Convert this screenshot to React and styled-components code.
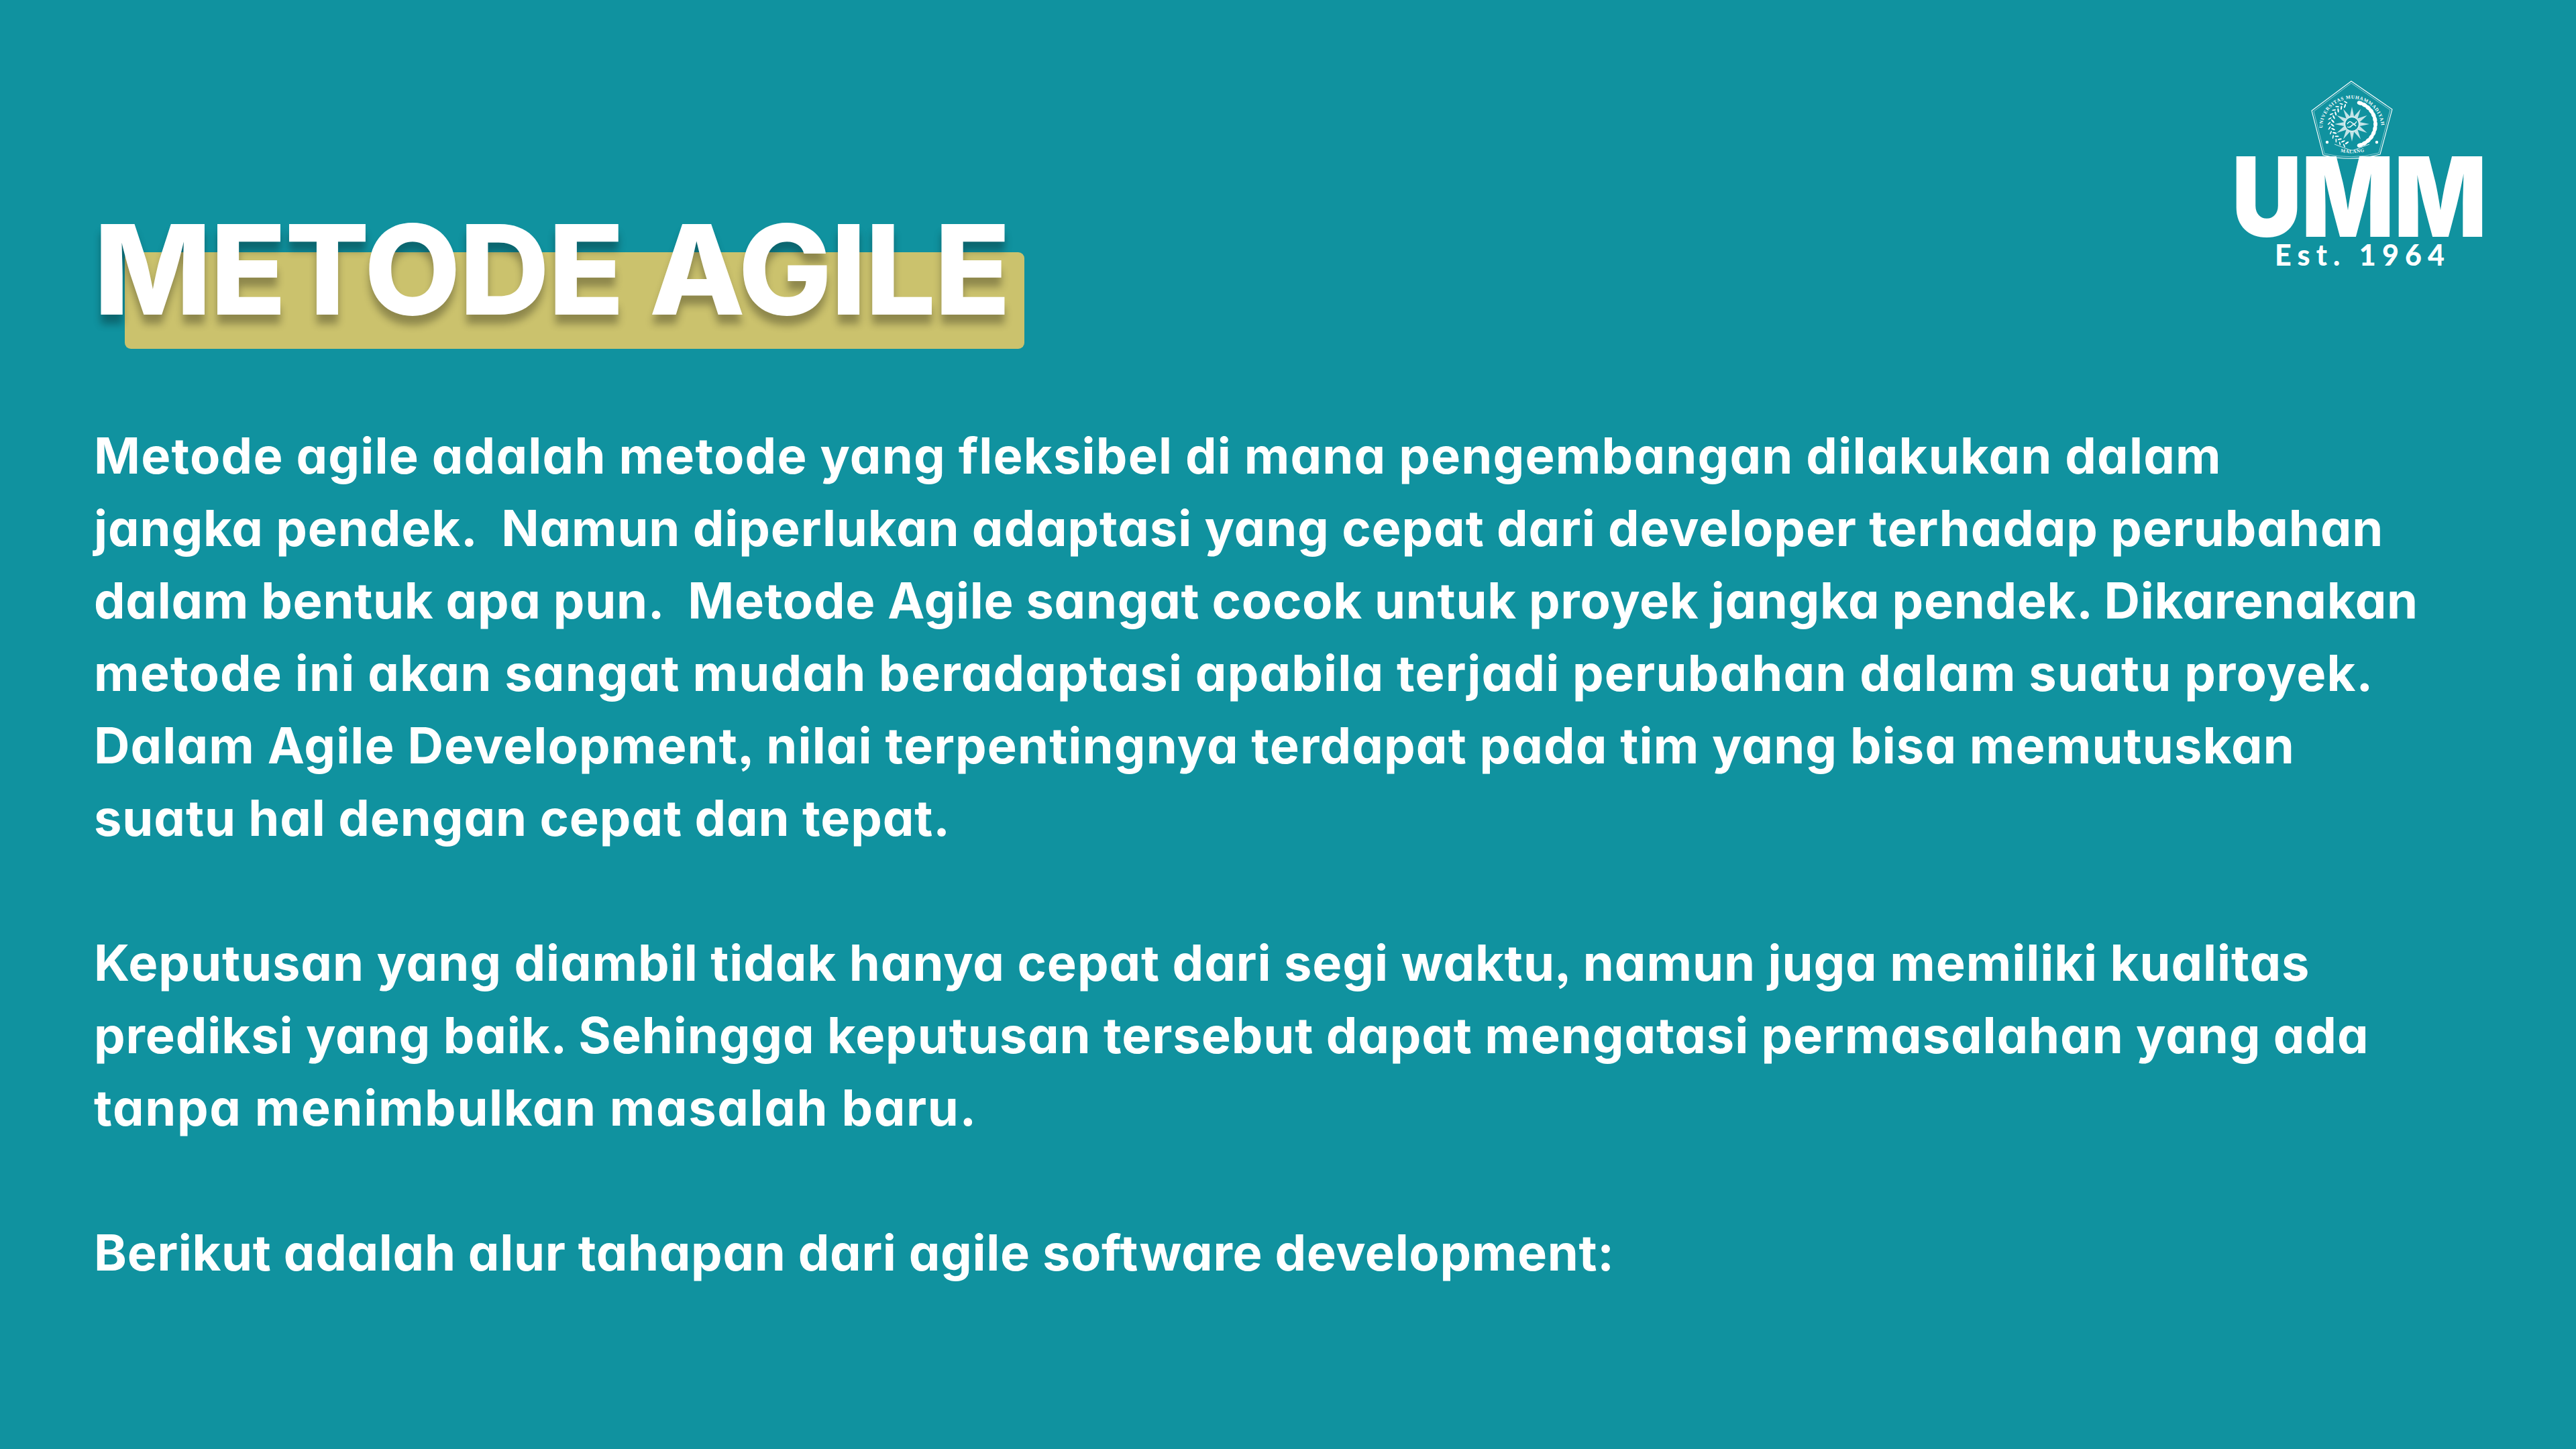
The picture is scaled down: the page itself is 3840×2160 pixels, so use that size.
import React from 'react'
import styled, { createGlobalStyle } from 'styled-components'

const Global = createGlobalStyle`
  html, body { margin: 0; padding: 0; background: #10929f; }
`

const Slide = styled.div`
  width: 3840px;
  height: 2160px;
  box-sizing: border-box;
  padding: 121px 141px 0 140px;
  background: #10929f;
  color: #fff;
  font-family: Inter, "Liberation Sans", sans-serif;
  font-feature-settings: "cv11" 1, "ss03" 1;
  overflow: hidden;
`

const Header = styled.header`
  display: flex;
  justify-content: space-between;
  align-items: flex-start;
`

const TitleBlock = styled.div`
  display: grid;
  margin-top: 188px;
`

const TitleBar = styled.div`
  grid-area: 1 / 1;
  width: 1341px;
  height: 144px;
  margin: 67px 0 0 46px;
  background: #cbc26d;
  border-radius: 9px;
`

const Title = styled.h1`
  grid-area: 1 / 1;
  margin: 0;
  font-size: 186px;
  line-height: 186px;
  font-weight: 800;
  letter-spacing: -1.9px;
  white-space: pre;
  text-shadow: 0 14px 12px rgba(0, 0, 0, 0.3);
`

const Body = styled.main`
  margin-top: 105px;
`

const Paragraph = styled.p`
  margin: 0 0 108px;
`

const Line = styled.span`
  display: block;
  height: 108px;
  font-size: 74px;
  line-height: 108px;
  font-weight: 700;
  white-space: pre;
  letter-spacing: ${(p) => p.$tracking}px;
`

const LogoSvg = styled.svg`
  display: block;
  width: 364px;
  height: 290px;
  overflow: visible;
`

const EmblemText = styled.text`
  font-family: "Liberation Serif", serif;
  font-size: 7.2px;
  font-weight: 700;
  fill: #fff;
`

const WordMark = styled.text`
  font-family: Inter, "Liberation Sans", sans-serif;
  font-size: 165px;
  font-weight: 900;
  fill: #fff;
`

const Since = styled.text`
  font-family: Lato, "Liberation Sans", sans-serif;
  font-size: 43px;
  font-weight: 900;
  fill: #fff;
`

const polar = (r, deg, cx = 60, cy = 64) => {
  const a = (deg * Math.PI) / 180
  return [cx + r * Math.cos(a), cy + r * Math.sin(a)]
}

const starPoints = Array.from({ length: 24 }, (_, i) => {
  const [x, y] = polar(i % 2 ? 12 : 26, i * 15 - 90)
  return `${x.toFixed(1)},${y.toFixed(1)}`
}).join(' ')

const chainAngles = [-72, -60, -48, -36, -24, -12, 0, 12, 24, 36, 48, 60, 72]
const leafAngles = [105, 117, 129, 141, 153, 165, 177, 189, 201, 213, 225, 237, 249]

const Logo = () => (
  <LogoSvg viewBox="0 0 364 290" fill="#fff">
    {/* emblem, 120 wide, centred over the wordmark */}
    <g transform="translate(111 0)">
      <g fill="none" stroke="#fff">
        <path d="M59 0 L120 42 L102 109 Q59 121 17 110 L0 44 Z" strokeWidth="1.1" />
        <path d="M59 3 L117 43 L100 107 Q59 118 19 108 L3 45 Z" strokeWidth="0.5" />
        <path d="M34 94 L58 103 L62 103 L86 94" strokeWidth="0.8" />
      </g>
      <defs>
        <path id="ringTop" d="M16 70 A44 44 0 0 1 104 70" />
        <path id="ringBottom" d="M41 105 Q60 110 81 104" />
      </defs>
      <EmblemText>
        <textPath href="#ringTop" textLength="134" lengthAdjust="spacing">UNIVERSITAS  MUHAMMADIYAH</textPath>
      </EmblemText>
      <EmblemText>
        <textPath href="#ringBottom" textLength="36" startOffset="2">MALANG</textPath>
      </EmblemText>
      <polygon points={starPoints} fillOpacity="0.75" />
      <circle cx="60" cy="64" r="10.5" fill="#10929f" stroke="#fff" strokeWidth="1" />
      <path d="M53 64 q3 -6 7 -2 q4 4 7 -2 M53 68 q4 2 7 -2 q3 -3 6 1" fill="none" stroke="#fff" strokeWidth="1.3" />
      {chainAngles.map((d) => {
        const [x, y] = polar(33, d, 62, 64)
        return <ellipse key={d} cx={x} cy={y} rx="4.6" ry="3" transform={`rotate(${d + 90} ${x} ${y})`} />
      })}
      {leafAngles.map((d) => {
        const [x, y] = polar(29, d)
        const [x2, y2] = polar(34, d + 5)
        return (
          <g key={d}>
            <ellipse cx={x} cy={y} rx="3.2" ry="1.1" transform={`rotate(${d + 40} ${x} ${y})`} />
            <ellipse cx={x2} cy={y2} rx="3" ry="0.9" transform={`rotate(${d - 40} ${x2} ${y2})`} />
          </g>
        )
      })}
      <circle cx="23" cy="91" r="2.2" />
      <circle cx="97" cy="91" r="2.2" />
    </g>
    {/* wordmark */}
    <WordMark x="-8" y="232" textLength="380" lengthAdjust="spacingAndGlyphs">UMM</WordMark>
    <Since x="56" y="275" textLength="253" lengthAdjust="spacing">Est. 1964</Since>
  </LogoSvg>
)

const paragraphs = [
  [
    ['Metode agile adalah metode yang fleksibel di mana pengembangan dilakukan dalam', 1.2],
    ['jangka pendek.  Namun diperlukan adaptasi yang cepat dari developer terhadap perubahan', 0.89],
    ['dalam bentuk apa pun.  Metode Agile sangat cocok untuk proyek jangka pendek. Dikarenakan', 0.7],
    ['metode ini akan sangat mudah beradaptasi apabila terjadi perubahan dalam suatu proyek.', 1.17],
    ['Dalam Agile Development, nilai terpentingnya terdapat pada tim yang bisa memutuskan', 1.13],
    ['suatu hal dengan cepat dan tepat.', 0.91],
  ],
  [
    ['Keputusan yang diambil tidak hanya cepat dari segi waktu, namun juga memiliki kualitas', 0.95],
    ['prediksi yang baik. Sehingga keputusan tersebut dapat mengatasi permasalahan yang ada', 0.91],
    ['tanpa menimbulkan masalah baru.', 1.63],
  ],
  [['Berikut adalah alur tahapan dari agile software development:', 0.68]],
]

export default function App() {
  return (
    <Slide>
      <Global />
      <Header>
        <TitleBlock>
          <TitleBar />
          <Title>METODE AGILE</Title>
        </TitleBlock>
        <Logo />
      </Header>
      <Body>
        {paragraphs.map((lines, i) => (
          <Paragraph key={i}>
            {lines.map(([text, tracking]) => (
              <Line key={text} $tracking={tracking}>{text}</Line>
            ))}
          </Paragraph>
        ))}
      </Body>
    </Slide>
  )
}
